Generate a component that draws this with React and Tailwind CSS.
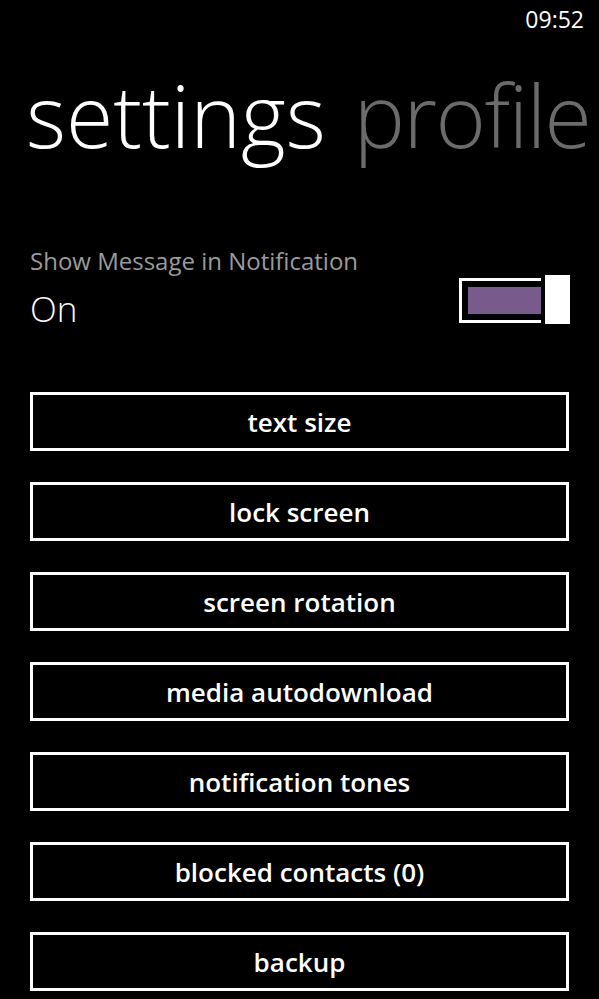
const buttons = [
  'text size',
  'lock screen',
  'screen rotation',
  'media autodownload',
  'notification tones',
  'blocked contacts (0)',
  'backup',
];

function Toggle() {
  return (
    <div className="flex items-start">
      <div className="mt-[3px] flex h-[45px] w-[82px] border-[3px] border-r-0 border-white py-[6px] pl-[6px]">
        <div className="flex-1 bg-[#785b8c]" />
      </div>
      <div className="ml-[4px] h-[49px] w-[25px] bg-white" />
    </div>
  );
}

export default function App() {
  return (
    <div className="h-[999px] w-full overflow-hidden bg-black text-white font-['Open_Sans',sans-serif]">
      {/* status bar */}
      <div className="h-[40px] pr-[15px] pt-[8px] text-right text-[23px] leading-none">09:52</div>

      {/* pivot header */}
      <div className="mt-[32px] flex h-[86px] gap-[28px] whitespace-nowrap pl-[26px] text-[86px] font-light leading-none">
        <span>settings</span>
        <span className="tracking-[-1.5px] text-[#6b6b6b]">profile</span>
      </div>

      {/* notification toggle */}
      <div className="mt-[91px] pl-[30px] pr-[29px]">
        <div className="text-[24px] leading-none text-[#9b9b9b]">Show Message in Notification</div>
        <div className="mt-[2px] flex h-[49px] items-start justify-between">
          <div className="mt-[16px] text-[35px] font-light leading-none">On</div>
          <Toggle />
        </div>
      </div>

      {/* buttons */}
      <div className="mt-[68px] flex flex-col gap-[31px] pl-[30px] pr-[30px]">
        {buttons.map((label) => (
          <button
            key={label}
            className="flex h-[59px] items-center justify-center border-[3px] border-white text-[26px] font-semibold leading-none"
          >
            {label}
          </button>
        ))}
      </div>
    </div>
  );
}
